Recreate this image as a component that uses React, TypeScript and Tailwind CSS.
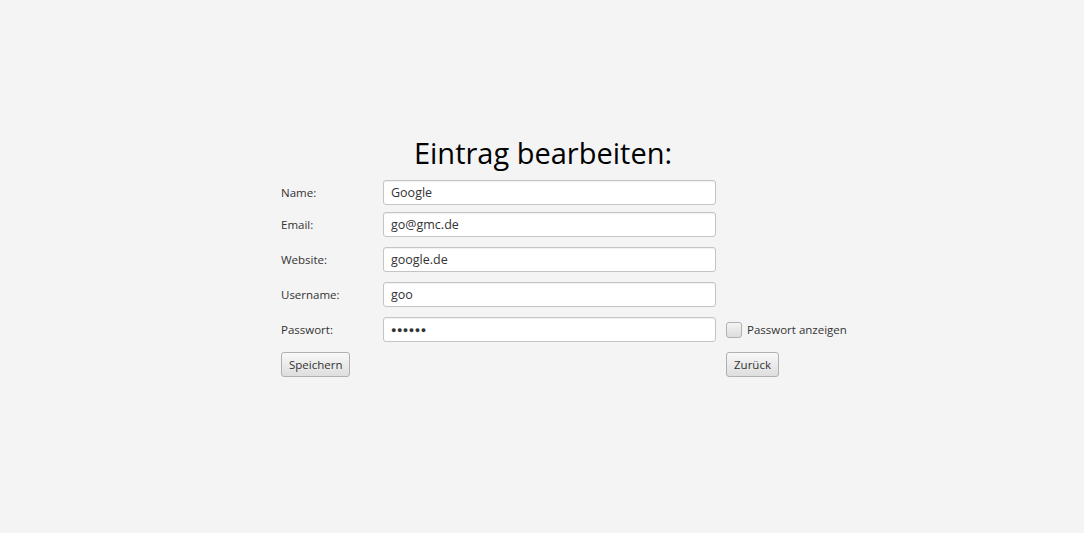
import React from 'react';

const font = { fontFamily: '"Open Sans", "Noto Sans", sans-serif' };

const rows = [
  { label: 'Name:', value: 'Google' },
  { label: 'Email:', value: 'go@gmc.de' },
  { label: 'Website:', value: 'google.de' },
  { label: 'Username:', value: 'goo' },
];

const Field = ({ value, dots = false }: { value: string; dots?: boolean }) => (
  <input
    readOnly
    value={value}
    className={`h-[25px] w-[333px] rounded-[3px] border border-[#c4c4c4] bg-white px-[7px] text-[#333] shadow-[inset_0_1px_1px_rgba(0,0,0,0.06)] outline-none ${
      dots ? 'text-[9px] tracking-[0.5px]' : 'text-[12.5px]'
    }`}
  />
);

const Button = ({ children }: { children: React.ReactNode }) => (
  <button className="flex h-[25px] items-center rounded-[3px] border border-[#b0b0b0] bg-gradient-to-b from-[#f8f8f8] to-[#dedede] px-[7px] text-[11.5px] text-[#333]">
    {children}
  </button>
);

export default function App() {
  return (
    <div className="h-[533px] w-full bg-[#f4f4f4] pt-[132px]" style={font}>
      <div className="ml-[281px] w-[580px]">
        <h1 className="ml-[-8px] w-[540px] text-center text-[29px] leading-[42px] text-black">
          Eintrag bearbeiten:
        </h1>
        <div className="mt-[6px] flex flex-col">
          {rows.map((r, i) => (
            <div key={r.label} className={`flex items-center ${i === 0 ? '' : i === 1 ? 'mt-[7px]' : 'mt-[10px]'}`}>
              <span className="w-[102px] text-[11.5px] text-[#333]">{r.label}</span>
              <Field value={r.value} />
            </div>
          ))}
          <div className="mt-[10px] flex items-center">
            <span className="w-[102px] text-[11.5px] text-[#333]">Passwort:</span>
            <Field value="●●●●●●" dots />
            <label className="ml-[10px] flex items-center gap-[5px] text-[11.5px] text-[#333]">
              <span className="h-[16px] w-[16px] rounded-[3px] border border-[#b0b0b0] bg-gradient-to-b from-[#f5f5f5] to-[#dcdcdc]" />
              Passwort anzeigen
            </label>
          </div>
          <div className="mt-[10px] flex h-[25px] items-center">
            <div className="w-[445px]">
              <div className="flex">
                <Button>Speichern</Button>
              </div>
            </div>
            <Button>Zurück</Button>
          </div>
        </div>
      </div>
    </div>
  );
}
